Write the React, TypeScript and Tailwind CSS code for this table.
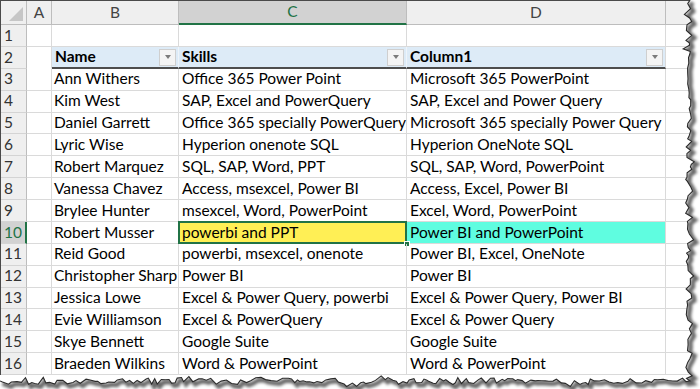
import React from "react";

const ROWS: [string, string, string][] = [
  ["", "", ""],
  ["Name", "Skills", "Column1"],
  ["Ann Withers", "Office 365 Power Point", "Microsoft 365 PowerPoint"],
  ["Kim West", "SAP, Excel and PowerQuery", "SAP, Excel and Power Query"],
  ["Daniel Garrett", "Office 365 specially PowerQuery", "Microsoft 365 specially Power Query"],
  ["Lyric Wise", "Hyperion onenote SQL", "Hyperion OneNote SQL"],
  ["Robert Marquez", "SQL, SAP, Word, PPT", "SQL, SAP, Word, PowerPoint"],
  ["Vanessa Chavez", "Access, msexcel, Power BI", "Access, Excel, Power BI"],
  ["Brylee Hunter", "msexcel, Word, PowerPoint", "Excel, Word, PowerPoint"],
  ["Robert Musser", "powerbi and PPT", "Power BI and PowerPoint"],
  ["Reid Good", "powerbi, msexcel, onenote", "Power BI, Excel, OneNote"],
  ["Christopher Sharp", "Power BI", "Power BI"],
  ["Jessica Lowe", "Excel & Power Query, powerbi", "Excel & Power Query, Power BI"],
  ["Evie Williamson", "Excel & PowerQuery", "Excel & Power Query"],
  ["Skye Bennett", "Google Suite", "Google Suite"],
  ["Braeden Wilkins", "Word & PowerPoint", "Word & PowerPoint"],
];

function makeEdge() {
  let s = 1234567;
  const rnd = () => {
    s = (s * 16807) % 2147483647;
    return s / 2147483647;
  };
  const jag = () => (rnd() - 0.5) * 7 + (rnd() < 0.15 ? (rnd() - 0.5) * 6 : 0);
  const pts: [number, number][] = [];
  // right edge, top to bottom
  for (let y = 0; y < 380; y += 2 + rnd() * 4) {
    pts.push([689 + jag(), y]);
  }
  pts.push([690, 381]);
  // bottom edge, right to left
  for (let x = 686; x > 0; x -= 2 + rnd() * 4) {
    pts.push([x, 381 + jag()]);
  }
  pts.push([0, 381]);
  return pts;
}

function TornEdge() {
  const pts = makeEdge();
  const line = pts.map((p, i) => `${i ? "L" : "M"}${p[0].toFixed(1)} ${p[1].toFixed(1)}`).join(" ");
  const inner = `M0 0 L${pts[0][0].toFixed(1)} 0 ${line.replace(/^M/, "L")} L0 0 Z`;
  const outside = `M0 0 H700 V389 H0 Z ${inner}`;
  return (
    <svg className="absolute inset-0 pointer-events-none" width="700" height="389" viewBox="0 0 700 389">
      <defs>
        <filter id="blur" x="-10%" y="-10%" width="120%" height="120%">
          <feGaussianBlur stdDeviation="1.8" />
        </filter>
        <clipPath id="out">
          <path d={outside} clipRule="evenodd" />
        </clipPath>
      </defs>
      <path d={outside} fill="#fff" fillRule="evenodd" />
      <g clipPath="url(#out)">
        <path d={line} transform="translate(2.5 2.5)" fill="none" stroke="#000" strokeOpacity="0.6" strokeWidth="4.5" filter="url(#blur)" />
      </g>
      <path d={line} fill="none" stroke="#2a2a2a" strokeWidth="1.1" />
    </svg>
  );
}

function Dropdown() {
  return (
    <span className="absolute right-[2px] top-[2px] flex h-[17px] w-[17px] items-center justify-center border border-[#cfcfcf] bg-[#f4f4f4]">
      <span className="h-0 w-0 border-x-[3.5px] border-t-[4px] border-x-transparent border-t-[#7b7b7b]" />
    </span>
  );
}

export default function App() {
  return (
    <div className="relative h-[389px] w-[700px] overflow-hidden bg-white font-['Lato',sans-serif] text-[15.5px] text-black">
      <div className="border-l border-t border-[#4a4a4a]">
        {/* column letters */}
        <div className="flex h-[24px] text-[#444]">
          <div className="relative w-[26px] shrink-0 border-b border-r border-[#bdbdbd] bg-[#efefef]">
            <span className="absolute bottom-[3px] right-[3px] h-0 w-0 border-b-[14px] border-l-[14px] border-b-[#c6c6c6] border-l-transparent" />
          </div>
          <div className="flex w-[25px] shrink-0 items-center justify-center border-b border-r border-[#bdbdbd] bg-[#efefef]">A</div>
          <div className="flex w-[127px] shrink-0 items-center justify-center border-b border-r border-[#bdbdbd] bg-[#efefef]">B</div>
          <div className="flex w-[228px] shrink-0 items-center justify-center border-b-2 border-r border-b-[#217346] border-r-[#bdbdbd] bg-[#d2d2d2] text-[#217346]">C</div>
          <div className="flex w-[259px] shrink-0 items-center justify-center border-b border-r border-[#bdbdbd] bg-[#efefef]">D</div>
          <div className="flex-1 border-b border-[#bdbdbd] bg-[#efefef]" />
        </div>

        {ROWS.map((r, i) => {
          const n = i + 1;
          const head = n === 2;
          const sel = n === 10;
          return (
            <div key={n} className="flex h-[21.875px] leading-none">
              <div
                className={`flex w-[26px] shrink-0 items-center pl-[3px] border-b border-[#d4d4d4] ${
                  sel ? "border-r-2 border-r-[#217346] bg-[#d2d2d2] text-[#217346]" : "border-r border-r-[#bdbdbd] bg-[#efefef] text-[#333]"
                }`}
              >
                {n}
              </div>
              <div className={`w-[25px] shrink-0 border-r border-b border-[#dadada] ${head ? "border-b-transparent" : ""}`} />
              {head ? (
                <>
                  <div className="relative flex w-[127px] shrink-0 items-center border-b-2 border-r border-b-[#4d4d4d] border-r-[#eef4fa] bg-[#ddebf7] pl-[3px] font-bold">
                    {r[0]}
                    <Dropdown />
                  </div>
                  <div className="relative flex w-[228px] shrink-0 items-center border-b-2 border-r border-b-[#4d4d4d] border-r-[#eef4fa] bg-[#ddebf7] pl-[3px] font-bold">
                    {r[1]}
                    <Dropdown />
                  </div>
                  <div className="relative flex w-[259px] shrink-0 items-center border-b-2 border-r border-b-[#4d4d4d] border-r-[#dadada] bg-[#ddebf7] pl-[3px] font-bold">
                    {r[2]}
                    <Dropdown />
                  </div>
                </>
              ) : (
                <>
                  <div className="flex w-[127px] shrink-0 items-center whitespace-nowrap border-b border-r border-[#dadada] pl-[2px]">{r[0]}</div>
                  <div
                    className={`relative flex w-[228px] shrink-0 items-center whitespace-nowrap border-b border-r border-[#dadada] pl-[3px] ${
                      sel ? "bg-[#ffef55]" : ""
                    }`}
                  >
                    {r[1]}
                    {sel && (
                      <>
                        <span className="absolute -left-[1px] -top-[1px] bottom-[-1px] right-[-1px] border-2 border-[#217346]" />
                        <span className="absolute bottom-[-4px] right-[-4px] h-[6px] w-[6px] border border-white bg-[#217346]" />
                      </>
                    )}
                  </div>
                  <div
                    className={`flex w-[259px] shrink-0 items-center whitespace-nowrap border-b border-r border-[#dadada] pl-[3px] ${
                      sel ? "bg-[#5ffde0]" : ""
                    }`}
                  >
                    {r[2]}
                  </div>
                </>
              )}
              <div className="flex-1 border-b border-[#dadada]" />
            </div>
          );
        })}
      </div>
      <TornEdge />
    </div>
  );
}
